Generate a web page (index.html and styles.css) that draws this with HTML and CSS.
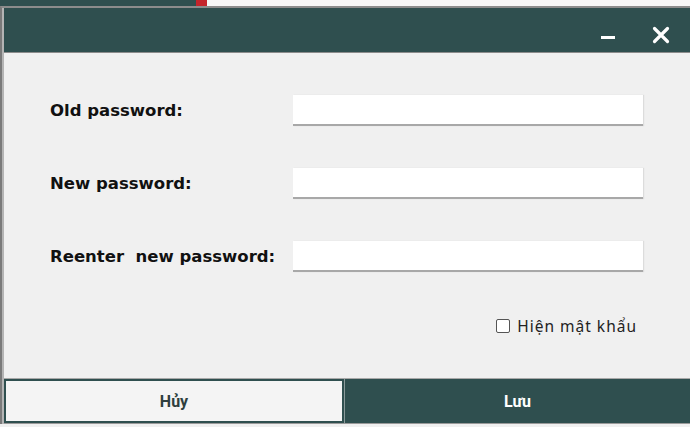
FILE: index.html
```html
<!DOCTYPE html>
<html>
<head>
<meta charset="utf-8">
<link rel="stylesheet" href="styles.css">
</head>
<body>
<div class="backdrop">
  <div class="bd-dark"></div>
  <div class="bd-red"></div>
  <div class="bd-light"></div>
</div>
<div class="dialog">
  <div class="titlebar">
    <button class="tb-btn tb-min" aria-label="Minimize">
      <svg width="16" height="16" viewBox="0 0 16 16"><rect x="1" y="7" width="14" height="3" fill="#fff"/></svg>
    </button>
    <button class="tb-btn tb-close" aria-label="Close">
      <svg width="18" height="18" viewBox="0 0 18 18"><path d="M2.5 2.5 L15.5 15.5 M15.5 2.5 L2.5 15.5" stroke="#fff" stroke-width="3.2" stroke-linecap="round"/></svg>
    </button>
  </div>
  <div class="content">
    <div class="form">
      <label class="lbl">Old password:</label>
      <div class="field"></div>
      <label class="lbl">New password:</label>
      <div class="field"></div>
      <label class="lbl">Reenter&nbsp; new password:</label>
      <div class="field"></div>
    </div>
    <div class="show-row">
      <span class="check"></span>
      <span class="show-text">Hiện mật khẩu</span>
    </div>
  </div>
  <div class="footer">
    <button class="btn btn-cancel">Hủy</button>
    <button class="btn btn-save">Lưu</button>
  </div>
</div>
</body>
</html>
```
FILE: styles.css
```css
html, body {
  margin: 0;
  padding: 0;
}
body {
  width: 690px;
  height: 427px;
  overflow: hidden;
  background: #f0f0f0;
  font-family: "DejaVu Sans", sans-serif;
}
.backdrop {
  display: flex;
  height: 6px;
}
.bd-dark { width: 196px; background: #2f4f4f; }
.bd-red { width: 11px; background: #c4242b; }
.bd-light { flex: 1; background: #f6f6f6; }

.dialog {
  border-top: 2px solid #8c8c8c;
  border-left: 2px solid #7a7a7a;
  padding-left: 2px;
  background: #f0f0f0;
  box-shadow: inset 2px 0 0 #b4b4b4;
}
.titlebar {
  height: 45px;
  box-sizing: border-box;
  padding-top: 9px;
  background: #2f4f4f;
  border-bottom: 1px solid #8c8c8c;
  display: flex;
  justify-content: flex-end;
  align-items: center;
  padding-right: 20px;
  gap: 36px;
}
.tb-btn {
  background: none;
  border: 0;
  padding: 0;
  display: flex;
  align-items: center;
}
.tb-min { margin-top: 5px; }

.content {
  height: 325px;
  padding-top: 42px;
  box-sizing: border-box;
  display: flex;
  flex-direction: column;
}
.form {
  display: grid;
  grid-template-columns: 243px 350px;
  row-gap: 42px;
  padding-left: 46px;
  align-items: center;
}
.lbl {
  font-family: "DejaVu Sans", sans-serif;
  font-weight: bold;
  font-size: 16.5px;
  color: #111;
}
.field {
  height: 31px;
  background: #fff;
  box-sizing: border-box;
  border-bottom: 2px solid #a8a8a8;
  box-shadow: 1px 0 1px #dcdcdc;
}
.show-row {
  display: flex;
  align-items: center;
  justify-content: flex-end;
  padding-right: 53px;
  margin-top: 43px;
  gap: 7px;
}
.check {
  width: 12px;
  height: 12px;
  border: 1px solid #555;
  border-radius: 2px;
  background: #fff;
}
.show-text {
  font-family: "Noto Sans", sans-serif;
  font-size: 15.5px;
  letter-spacing: 1px;
  color: #222;
}

.footer {
  display: flex;
  border-top: 1px solid #a8a8a8;
  border-bottom: 1px solid #9a9a9a;
  height: 44px;
}
.btn {
  border: 0;
  margin: 0;
  font-family: "Roboto", "DejaVu Sans", sans-serif;
  font-weight: bold;
  font-size: 16px;
  cursor: pointer;
}
.btn-cancel {
  width: 340px;
  background: #f4f4f4;
  border: 2px solid #2f4f4f;
  color: #2f3f3f;
}
.btn-save {
  flex: 1;
  background: #2f4f4f;
  color: #fff;
  border-left: 1px solid #8a9a9a;
}
```
